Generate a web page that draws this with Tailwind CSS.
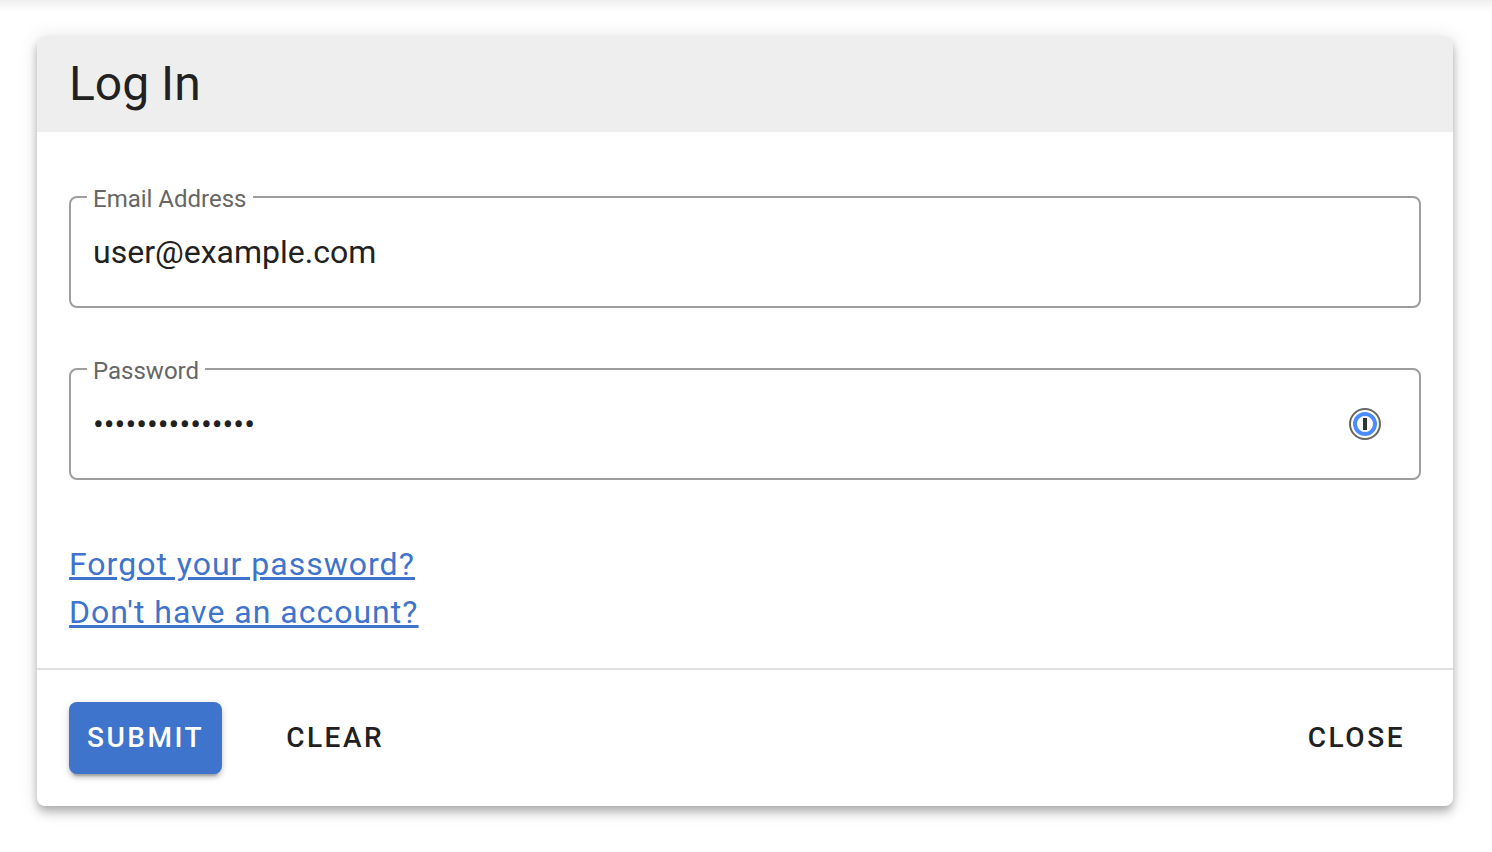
<!DOCTYPE html>
<html lang="en">
<head>
<meta charset="utf-8">
<meta name="viewport" content="width=device-width, initial-scale=1">
<title>Log In</title>
<script src="https://cdn.jsdelivr.net/npm/@tailwindcss/browser@4"></script>
</head>
<body class="bg-white font-['Roboto',sans-serif] text-[#212121]">
<div class="h-3 bg-linear-to-b from-[#efefef] to-white"></div>
<main class="pt-6 pr-[39px] pb-9 pl-[37px]">
  <form class="rounded-lg bg-white shadow-[0_4px_8px_-2px_rgba(0,0,0,0.2),0_8px_10px_0_rgba(0,0,0,0.14),0_2px_20px_0_rgba(0,0,0,0.12)]">
    <header class="rounded-t-lg bg-[#eeeeee] px-8 py-4">
      <h1 class="text-5xl leading-16">Log In</h1>
    </header>

    <div class="px-8 pt-[51px] pb-8">
      <fieldset class="rounded-lg border-2 border-[#9e9e9e] px-4 pb-[13px]">
        <legend class="px-[6px] pt-1 text-2xl leading-6 text-[#666666]"><label for="email">Email Address</label></legend>
        <input id="email" type="email" value="user@example.com" class="block h-[82px] w-full px-[6px] text-[32px] outline-none">
      </fieldset>

      <fieldset class="mt-[47px] rounded-lg border-2 border-[#9e9e9e] pr-[38px] pb-[13px] pl-4">
        <legend class="px-[6px] pt-1 text-2xl leading-6 text-[#666666]"><label for="password">Password</label></legend>
        <div class="flex items-center">
          <input id="password" type="password" value="correct-battery" class="block h-[82px] min-w-0 flex-1 px-[6px] text-[32px] outline-none">
          <button type="button" aria-label="Fill from password manager" class="size-8">
            <svg viewBox="0 0 32 32" class="size-8" fill="none">
              <circle cx="16" cy="16" r="15" fill="#fff" stroke="#666" stroke-width="2"/>
              <circle cx="16" cy="16" r="10" stroke="#4b8bff" stroke-width="4"/>
              <path d="M14 10h4v12h-4z" fill="#333"/>
            </svg>
          </button>
        </div>
      </fieldset>

      <nav class="mt-15 flex flex-col items-start text-[32px] leading-12 tracking-[0.03125em] text-[#3f74cc] underline">
        <a href="#forgot">Forgot your password?</a>
        <a href="#register">Don't have an account?</a>
      </nav>
    </div>

    <footer class="flex items-center border-t-2 border-[#e0e0e0] p-8 text-[28px] font-medium tracking-[0.09em]">
      <button type="submit" class="h-18 rounded-lg bg-[#3f74cc] px-[18px] text-white shadow-[0_6px_2px_-4px_rgba(0,0,0,0.2),0_4px_4px_0_rgba(0,0,0,0.14),0_2px_10px_0_rgba(0,0,0,0.12)]">SUBMIT</button>
      <button type="reset" class="ml-12 h-18 px-4">CLEAR</button>
      <button type="button" class="ml-auto h-18 px-4">CLOSE</button>
    </footer>
  </form>
</main>
</body>
</html>
